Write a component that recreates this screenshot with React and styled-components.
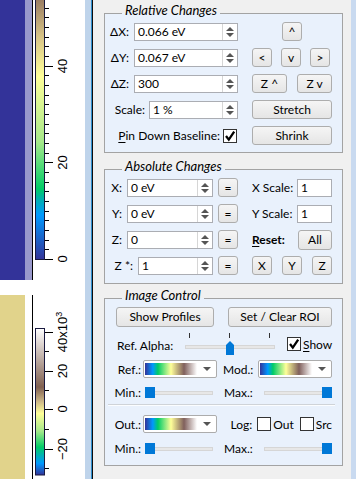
import React from "react";
import styled, { createGlobalStyle } from "styled-components";

const GlobalStyle = createGlobalStyle`
  html, body { margin: 0; padding: 0; }
  body {
    background: #f0f0f0;
    font-family: Lato, "Noto Sans", "DejaVu Sans", sans-serif;
    font-size: 12px;
    color: #000;
    overflow: hidden;
  }
  #root { width: 356px; height: 479px; }
`;

const Screen = styled.div`
  display: flex;
  width: 356px;
  height: 479px;
  overflow: hidden;
`;

/* ---------- left plot column ---------- */
const PlotColumn = styled.div`
  flex: none;
  width: 85px;
  background: #fff;
  display: flex;
  flex-direction: column;
`;
const PlotRow = styled.div`
  flex: none;
  display: flex;
  height: ${(p) => p.$h}px;
  margin-top: ${(p) => p.$mt || 0}px;
`;
const ImageStrip = styled.div`
  flex: none;
  width: 33px;
  box-sizing: border-box;
  border-right: 1px solid #000;
  display: flex;
`;
const ImageFill = styled.div`
  flex: none;
  width: ${(p) => p.$w}px;
  background: ${(p) => p.$c};
`;
const BarSvg = styled.svg`
  display: block;
  flex: none;
`;

const Stripe = styled.div`
  flex: none;
  width: ${(p) => p.$w}px;
  background: ${(p) => p.$c};
`;
const Divider = styled.div`
  flex: none;
  width: 1px;
  border-left: 1px solid #2f8fce;
  background: #0d0d0d;
`;

/* ---------- control panel ---------- */
const Panel = styled.div`
  flex: none;
  width: 258px;
  box-sizing: border-box;
  background: #f0f0f0;
  padding: 6px 8px 0 11px;
  display: flex;
  flex-direction: column;
`;

const Group = styled.fieldset`
  margin: ${(p) => p.$mt || 0}px 0 0 0;
  padding: 0;
  width: 239px;
  box-sizing: border-box;
  border: 1px solid #a3a3a3;
  background: #e9f1fc;
  min-width: 0;
`;
const Legend = styled.legend`
  margin-left: 17px;
  padding: 0 3px;
  font-style: italic;
  font-size: 13px;
  line-height: 14px;
  height: 14px;
  transform: translateY(-3px);
`;

const Grid = styled.div`
  display: grid;
  grid-template-columns: 133px 80px;
  grid-auto-rows: 19px;
  column-gap: 14px;
  row-gap: 7px;
  padding: 2px 10px ${(p) => p.$pb}px 0;
`;
const LeftCell = styled.div`
  display: flex;
  align-items: center;
  justify-content: flex-end;
  gap: ${(p) => p.$gap ?? 4}px;
`;
const RightCell = styled.div`
  display: flex;
  align-items: center;
  justify-content: ${(p) => p.$justify || "space-between"};
  padding-right: ${(p) => p.$pr || 0}px;
`;

const Label = styled.span`
  white-space: nowrap;
  font-weight: ${(p) => (p.$bold ? 700 : 400)};
  margin-right: ${(p) => p.$mr || 0}px;
`;
const Key = styled.span`
  text-decoration: underline;
  text-underline-offset: 2px;
`;

const Btn = styled.button`
  flex: none;
  width: ${(p) => p.$w}px;
  height: ${(p) => p.$h || 19}px;
  box-sizing: border-box;
  padding: 0;
  border: 1px solid #adadad;
  border-radius: 3px;
  background: linear-gradient(#f5f5f5, #e5e5e5);
  font: inherit;
  color: #000;
  line-height: 1;
  white-space: nowrap;
`;

const SpinFrame = styled.div`
  flex: none;
  width: ${(p) => p.$w}px;
  height: 18px;
  box-sizing: border-box;
  border: 1px solid #abadb3;
  background: #fff;
  display: flex;
`;
const SpinValue = styled.span`
  flex: 1;
  padding-left: 3px;
  line-height: 16px;
  white-space: nowrap;
  overflow: hidden;
`;
const SpinArrows = styled.span`
  flex: none;
  width: 14px;
  border-left: 1px solid #d6d6d6;
  display: flex;
  flex-direction: column;
  align-items: center;
  justify-content: center;
  gap: 2px;
`;
const Tri = styled.span`
  width: 0;
  height: 0;
  border-left: 4px solid transparent;
  border-right: 4px solid transparent;
  ${(p) =>
    p.$up ? "border-bottom: 4px solid #555;" : "border-top: 4px solid #555;"}
`;

const TextInput = styled.div`
  flex: none;
  width: ${(p) => p.$w}px;
  height: 18px;
  box-sizing: border-box;
  border: 1px solid #abadb3;
  background: #fff;
  padding-left: 3px;
  line-height: 16px;
`;

const Box = styled.span`
  flex: none;
  width: 14px;
  height: 14px;
  box-sizing: border-box;
  border: 1px solid #333;
  background: #fff;
  display: inline-flex;
  align-items: center;
  justify-content: center;
  margin-right: ${(p) => p.$mr || 0}px;
`;

/* image control */
const G3Body = styled.div`
  display: flex;
  flex-direction: column;
  padding: 2px 10px 11px 7px;
`;
const ButtonsRow = styled.div`
  display: flex;
  justify-content: space-between;
  padding-left: 4px;
`;
const AlphaRow = styled.div`
  display: flex;
  align-items: center;
  height: 22px;
  margin-top: 6px;
  padding-left: 5px;
`;
const AlphaLabel = styled.span`
  flex: none;
  width: 68px;
  padding-top: 2px;
`;
const AlphaSlider = styled.div`
  position: relative;
  flex: none;
  width: 90px;
  height: 22px;
  display: flex;
  flex-direction: column;
`;
const TickRow = styled.div`
  display: flex;
  justify-content: space-between;
  padding: 0 5px 0 4px;
  height: 5px;
`;
const Tick = styled.span`
  width: 1px;
  height: 5px;
  background: #333;
`;
const AlphaTrack = styled.div`
  margin-top: 7px;
  height: 4px;
  box-sizing: border-box;
  background: #e7e7e7;
  border: 1px solid #d6d6d6;
`;
const AlphaThumb = styled.span`
  position: absolute;
  left: 41px;
  top: 8px;
  width: 8px;
  height: 14px;
  background: #0078d7;
  clip-path: polygon(50% 0, 100% 28%, 100% 100%, 0 100%, 0 28%);
`;
const CheckLabel = styled.label`
  display: flex;
  align-items: center;
  margin-left: ${(p) => p.$ml || 0}px;
  gap: 2px;
`;

const CtrlRow = styled.div`
  display: flex;
  align-items: center;
  height: ${(p) => p.$h}px;
  margin-top: ${(p) => p.$mt}px;
`;
const LeftHalf = styled.div`
  flex: none;
  width: 105px;
  display: flex;
  align-items: center;
`;
const RLabel = styled.span`
  flex: none;
  width: 29px;
  text-align: right;
  margin-right: ${(p) => p.$mr || 2}px;
  white-space: nowrap;
`;
const RightHalf = styled.div`
  flex: 1;
  margin-left: 6px;
  display: flex;
  align-items: center;
  justify-content: ${(p) => p.$justify || "space-between"};
  padding-left: ${(p) => p.$pl || 0}px;
`;

const ComboFrame = styled.div`
  flex: none;
  width: ${(p) => p.$w}px;
  height: 18px;
  box-sizing: border-box;
  border: 1px solid #acacac;
  border-radius: 2px;
  background: #fff;
  display: flex;
  align-items: center;
  padding-left: 1px;
`;
const Swatch = styled.span`
  flex: none;
  width: 52px;
  height: 12px;
  background: linear-gradient(
    to right,
    #333399 0%,
    #0099ff 15%,
    #00cc66 25%,
    #ffff99 50%,
    #80605c 75%,
    #ffffff 100%
  );
`;
const ComboArrow = styled.span`
  margin-left: auto;
  margin-right: 5px;
  width: 0;
  height: 0;
  border-left: 4px solid transparent;
  border-right: 4px solid transparent;
  border-top: 4px solid #555;
`;

const SliderBox = styled.div`
  position: relative;
  flex: none;
  width: ${(p) => p.$w}px;
  height: 11px;
  margin-left: ${(p) => p.$ml || 0}px;
  display: flex;
  align-items: center;
`;
const SliderTrack = styled.div`
  flex: 1;
  height: 4px;
  box-sizing: border-box;
  background: #e7e7e7;
  border: 1px solid #d6d6d6;
`;
const SliderThumb = styled.span`
  position: absolute;
  top: 0;
  ${(p) => (p.$end ? "right: 0;" : "left: 0;")}
  width: 10px;
  height: 11px;
  background: #0078d7;
`;

const Separator = styled.div`
  margin: 6px -3px 0 -4px;
  height: 0;
  border-top: 1px solid #cfd3d8;
  border-bottom: 1px solid #fbfdff;
`;

/* ---------- small components ---------- */
function Spin({ w, value }) {
  return (
    <SpinFrame $w={w}>
      <SpinValue>{value}</SpinValue>
      <SpinArrows>
        <Tri $up />
        <Tri />
      </SpinArrows>
    </SpinFrame>
  );
}

function CheckBox({ checked, mr }) {
  return (
    <Box $mr={mr}>
      {checked && (
        <svg width="12" height="12" viewBox="0 0 12 12">
          <path d="M2 6 L4.8 9.6 L10.2 1.6" fill="none" stroke="#000" strokeWidth="2.3" />
        </svg>
      )}
    </Box>
  );
}

function Combo({ w }) {
  return (
    <ComboFrame $w={w}>
      <Swatch />
      <ComboArrow />
    </ComboFrame>
  );
}

function Slider({ w, end, ml }) {
  return (
    <SliderBox $w={w} $ml={ml}>
      <SliderTrack />
      <SliderThumb $end={end} />
    </SliderBox>
  );
}

const labelFont = { fontFamily: "'Liberation Sans', Arial, sans-serif", fontSize: 13 };

function TopColorbar() {
  const ticks = [];
  for (let k = 0; k <= 26; k++) {
    ticks.push({ y: Math.round(259 - k * 9.667) + 0.5, major: k % 10 === 0 });
  }
  const labels = [
    { y: 259, t: "0" },
    { y: 162.5, t: "20" },
    { y: 66, t: "40" },
  ];
  return (
    <BarSvg width="52" height="280" viewBox="0 0 52 280">
      <defs>
        <linearGradient id="terrainTop" x1="0" y1="0" x2="0" y2="1">
          <stop offset="0" stopColor="#977a61" />
          <stop offset="0.15" stopColor="#d8c487" />
          <stop offset="0.3" stopColor="#ffff99" />
          <stop offset="0.55" stopColor="#a6e98a" />
          <stop offset="0.73" stopColor="#00cc66" />
          <stop offset="0.77" stopColor="#00b0b0" />
          <stop offset="0.83" stopColor="#0099ff" />
          <stop offset="1" stopColor="#333399" />
        </linearGradient>
      </defs>
      <rect x="2.5" y="-2" width="9" height="261.5" fill="url(#terrainTop)" stroke="#1a1a40" />
      {ticks.map((t, i) => (
        <line key={i} x1="12" x2={t.major ? 20 : 16} y1={t.y} y2={t.y} stroke="#000" />
      ))}
      {labels.map((l) => (
        <text
          key={l.t}
          transform={`translate(34 ${l.y}) rotate(-90)`}
          textAnchor="middle"
          fill="#000"
          style={labelFont}
        >
          {l.t}
        </text>
      ))}
    </BarSvg>
  );
}

function BottomColorbar() {
  const major = [37, 76, 114, 154];
  const minor = [56, 95, 134, 173];
  return (
    <BarSvg width="52" height="184" viewBox="0 0 52 184">
      <defs>
        <linearGradient id="terrainBottom" x1="0" y1="0" x2="0" y2="1">
          <stop offset="0" stopColor="#ffffff" />
          <stop offset="0.4" stopColor="#806050" />
          <stop offset="0.5" stopColor="#cdb888" />
          <stop offset="0.58" stopColor="#ffff99" />
          <stop offset="0.7" stopColor="#a6e98a" />
          <stop offset="0.81" stopColor="#00cc66" />
          <stop offset="0.92" stopColor="#0099ff" />
          <stop offset="1" stopColor="#333399" />
        </linearGradient>
      </defs>
      <rect x="2.5" y="33.5" width="9" height="146.5" fill="url(#terrainBottom)" stroke="#1a1a40" />
      {major.map((y) => (
        <line key={"M" + y} x1="12" x2="20" y1={y + 0.5} y2={y + 0.5} stroke="#000" />
      ))}
      {minor.map((y) => (
        <line key={"m" + y} x1="12" x2="16" y1={y + 0.5} y2={y + 0.5} stroke="#000" />
      ))}
      <text transform="translate(34 37) rotate(-90)" textAnchor="middle" fill="#000" style={labelFont}>
        40x10
        <tspan dy="-5" fontSize="9">
          3
        </tspan>
      </text>
      <text transform="translate(34 76) rotate(-90)" textAnchor="middle" fill="#000" style={labelFont}>
        20
      </text>
      <text transform="translate(34 114) rotate(-90)" textAnchor="middle" fill="#000" style={labelFont}>
        0
      </text>
      <text transform="translate(34 154) rotate(-90)" textAnchor="middle" fill="#000" style={labelFont}>
        −20
      </text>
    </BarSvg>
  );
}

export default function App() {
  return (
    <>
      <GlobalStyle />
      <Screen>
        <PlotColumn>
          <PlotRow $h={280}>
            <ImageStrip>
              <ImageFill $w={25} $c="#333399" />
              <ImageFill $w={7} $c="#9999cc" />
            </ImageStrip>
            <TopColorbar />
          </PlotRow>
          <PlotRow $h={184} $mt={15}>
            <ImageStrip>
              <ImageFill $w={25} $c="#e1d38b" />
              <ImageFill $w={7} $c="#ffffff" />
            </ImageStrip>
            <BottomColorbar />
          </PlotRow>
        </PlotColumn>
        <Stripe $w={6} $c="#bfd4eb" />
        <Divider />
        <Panel>
          <Group>
            <Legend>Relative Changes</Legend>
            <Grid $pb={7}>
              <LeftCell $gap={5}>
                <Label>ΔX:</Label>
                <Spin w={104} value="0.066 eV" />
              </LeftCell>
              <RightCell $justify="center">
                <Btn $w={20}>^</Btn>
              </RightCell>

              <LeftCell $gap={5}>
                <Label>ΔY:</Label>
                <Spin w={104} value="0.067 eV" />
              </LeftCell>
              <RightCell $pr={2}>
                <Btn $w={20}>&lt;</Btn>
                <Btn $w={20}>v</Btn>
                <Btn $w={20}>&gt;</Btn>
              </RightCell>

              <LeftCell $gap={5}>
                <Label>ΔZ:</Label>
                <Spin w={104} value="300" />
              </LeftCell>
              <RightCell>
                <Btn $w={35}>Z ^</Btn>
                <Btn $w={35}>Z v</Btn>
              </RightCell>

              <LeftCell>
                <Label>Scale:</Label>
                <Spin w={89} value="1 %" />
              </LeftCell>
              <RightCell>
                <Btn $w={80}>Stretch</Btn>
              </RightCell>

              <LeftCell $gap={3}>
                <Label>
                  <Key>P</Key>in Down Baseline:
                </Label>
                <CheckBox checked mr={1} />
              </LeftCell>
              <RightCell>
                <Btn $w={80}>Shrink</Btn>
              </RightCell>
            </Grid>
          </Group>

          <Group $mt={9}>
            <Legend>Absolute Changes</Legend>
            <Grid $pb={8}>
              <LeftCell $gap={5}>
                <Label>X:</Label>
                <Spin w={86} value="0 eV" />
                <Btn $w={20}>=</Btn>
              </LeftCell>
              <RightCell>
                <Label>X Scale:</Label>
                <TextInput $w={35}>1</TextInput>
              </RightCell>

              <LeftCell $gap={5}>
                <Label>Y:</Label>
                <Spin w={86} value="0 eV" />
                <Btn $w={20}>=</Btn>
              </LeftCell>
              <RightCell>
                <Label>Y Scale:</Label>
                <TextInput $w={35}>1</TextInput>
              </RightCell>

              <LeftCell $gap={5}>
                <Label>Z:</Label>
                <Spin w={86} value="0" />
                <Btn $w={20}>=</Btn>
              </LeftCell>
              <RightCell>
                <Label $bold>
                  <Key>R</Key>eset:
                </Label>
                <Btn $w={34} $h={20}>
                  All
                </Btn>
              </RightCell>

              <LeftCell $gap={5}>
                <Label>Z *:</Label>
                <Spin w={75} value="1" />
                <Btn $w={20}>=</Btn>
              </LeftCell>
              <RightCell>
                <Btn $w={20}>X</Btn>
                <Btn $w={20}>Y</Btn>
                <Btn $w={20}>Z</Btn>
              </RightCell>
            </Grid>
          </Group>

          <Group $mt={7}>
            <Legend>Image Control</Legend>
            <G3Body>
              <ButtonsRow>
                <Btn $w={98} $h={20}>
                  Show Profiles
                </Btn>
                <Btn $w={104} $h={20}>
                  Set / Clear ROI
                </Btn>
              </ButtonsRow>

              <AlphaRow>
                <AlphaLabel>Ref. Alpha:</AlphaLabel>
                <AlphaSlider>
                  <TickRow>
                    <Tick />
                    <Tick />
                    <Tick />
                  </TickRow>
                  <AlphaTrack />
                  <AlphaThumb />
                </AlphaSlider>
                <CheckLabel $ml={12}>
                  <CheckBox checked />
                  <span>
                    <Key>S</Key>how
                  </span>
                </CheckLabel>
              </AlphaRow>

              <CtrlRow $h={18} $mt={5}>
                <LeftHalf>
                  <RLabel>Ref.:</RLabel>
                  <Combo w={74} />
                </LeftHalf>
                <RightHalf>
                  <Label>Mod.:</Label>
                  <Combo w={74} />
                </RightHalf>
              </CtrlRow>

              <CtrlRow $h={11} $mt={9}>
                <LeftHalf>
                  <RLabel $mr={4}>Min.:</RLabel>
                  <Slider w={68} />
                </LeftHalf>
                <RightHalf $pl={1}>
                  <Label>Max.:</Label>
                  <Slider w={68} end />
                </RightHalf>
              </CtrlRow>

              <Separator />

              <CtrlRow $h={18} $mt={9}>
                <LeftHalf>
                  <RLabel>Out.:</RLabel>
                  <Combo w={74} />
                </LeftHalf>
                <RightHalf $justify="flex-end">
                  <Label $mr={5}>Log:</Label>
                  <CheckLabel>
                    <CheckBox />
                    <span>Out</span>
                  </CheckLabel>
                  <CheckLabel $ml={6}>
                    <CheckBox />
                    <span>Src</span>
                  </CheckLabel>
                </RightHalf>
              </CtrlRow>

              <CtrlRow $h={11} $mt={10}>
                <LeftHalf>
                  <RLabel $mr={4}>Min.:</RLabel>
                  <Slider w={68} />
                </LeftHalf>
                <RightHalf $pl={1}>
                  <Label>Max.:</Label>
                  <Slider w={68} end />
                </RightHalf>
              </CtrlRow>
            </G3Body>
          </Group>
        </Panel>
        <Stripe $w={5} $c="#c9daf0" />
      </Screen>
    </>
  );
}
